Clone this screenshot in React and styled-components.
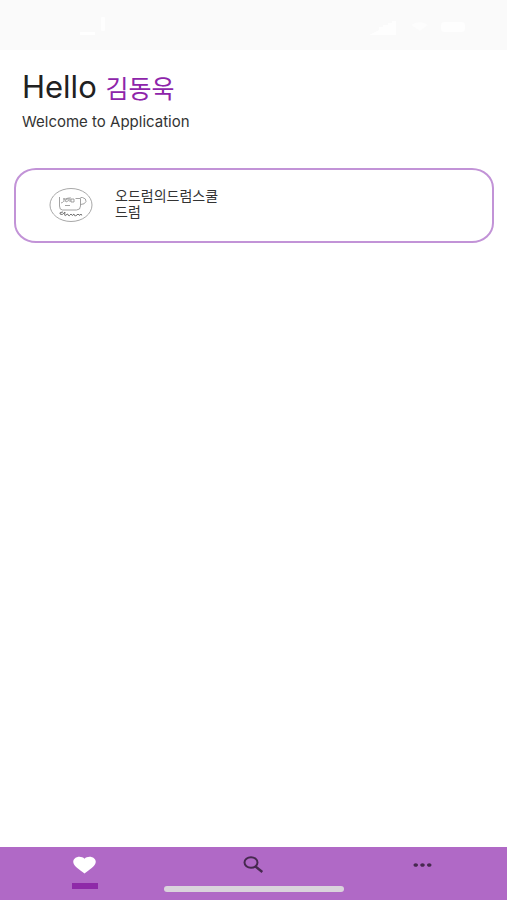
import React, { useState } from 'react';
import styled, { createGlobalStyle } from 'styled-components';
import { MdFavorite, MdMoreHoriz } from 'react-icons/md';

const GlobalStyle = createGlobalStyle`
  * {
    box-sizing: border-box;
  }

  body {
    margin: 0;
    background-color: #ffffff;
    font-family: Inter, 'Noto Sans CJK KR', sans-serif;
  }
`;

const Page = styled.div`
  min-height: 100vh;
  display: flex;
  flex-direction: column;
`;

const StatusBar = styled.div`
  height: 50px;
  padding: 16px 40px 0 68px;
  display: flex;
  justify-content: space-between;
  background-color: #fafafa;
`;

const StatusIcons = styled.svg`
  display: block;
  fill: #ffffff;
`;

const Header = styled.header`
  padding: 19px 22px 0;
`;

const Title = styled.h1`
  margin: 0;
  font-size: 31px;
  font-weight: 400;
  line-height: 36px;
  color: #212121;
`;

const UserName = styled.span`
  font-size: 25px;
  color: #8e24aa;
`;

const Subtitle = styled.p`
  margin: 5px 0 0;
  font-size: 15px;
  line-height: 20px;
  color: #333333;
`;

const Main = styled.main`
  flex: 1;
  padding: 36px 13px 0 14px;
`;

const SchoolCard = styled.a`
  display: flex;
  align-items: flex-start;
  gap: 22px;
  padding: 18px 33px;
  border: 2px solid #c293d7;
  border-radius: 22px / 20px;
  color: #333333;
  text-decoration: none;
`;

const SchoolLogo = styled.svg`
  flex: none;
  display: block;
`;

const SchoolText = styled.div`
  font-size: 14px;
  line-height: 16px;
`;

const TabBar = styled.nav`
  position: relative;
  display: flex;
  height: 53px;
  background-color: #b069c6;
`;

const Tab = styled.button`
  flex: 1;
  display: flex;
  flex-direction: column;
  align-items: center;
  gap: 7px;
  padding: 7px 0 0;
  border: 0;
  background: none;
  color: ${({ $active }) => ($active ? '#ffffff' : '#46294f')};
  cursor: pointer;

  svg {
    width: 27px;
    height: 22px;
  }

  &::after {
    content: '';
    width: 26px;
    height: 6px;
    background-color: ${({ $active }) => ($active ? '#8e2aa8' : 'transparent')};
  }
`;

const HomeIndicator = styled.div`
  position: absolute;
  left: 50%;
  bottom: 8px;
  width: 180px;
  height: 6px;
  margin-left: -90px;
  border-radius: 3px;
  background-color: #dad3dc;
`;

const SearchIcon = () => (
  <svg viewBox="0 0 27 22" fill="none" stroke="currentColor" strokeWidth="2" aria-hidden="true">
    <ellipse cx="11" cy="8.500" rx="6.500" ry="5.200" />
    <path d="M15.500 12.500l6.800 5.500" strokeWidth="2.400" />
  </svg>
);

const tabs = [
  { label: 'Favorites', Icon: MdFavorite },
  { label: 'Search', Icon: SearchIcon },
  { label: 'More', Icon: MdMoreHoriz },
];

const App = () => {
  const [active, setActive] = useState('Favorites');

  return (
    <>
      <GlobalStyle />
      <Page>
        <StatusBar>
          <StatusIcons width="40" height="20" aria-hidden="true">
            <rect x="12" y="16" width="15" height="3" />
            <rect x="33" y="1" width="4" height="14" rx="1" opacity="0.8" />
          </StatusIcons>
          <StatusIcons width="98" height="20" aria-hidden="true">
            <path d="M0 19L10 14V11h4V9h5V7h4V5h4v14z" opacity="0.7" />
            <path d="M42 9q9-6 17 0l-8 6z" opacity="0.5" />
            <rect x="72" y="6" width="24" height="10" rx="3" opacity="0.7" />
          </StatusIcons>
        </StatusBar>

        <Header>
          <Title>
            Hello <UserName>김동욱</UserName>
          </Title>
          <Subtitle>Welcome to Application</Subtitle>
        </Header>

        <Main>
          <SchoolCard href="#school">
            <SchoolLogo width="44" height="35" viewBox="0 0 44 35" fill="none" stroke="#8c8c8c" aria-hidden="true">
              <ellipse cx="22" cy="17" rx="21" ry="16.500" stroke="#a8a8a8" />
              {/* cup with its handle */}
              <path
                d="M10.500 9v9q0 4 3 4h14q4 0 4-4V10.500h-5M31.500 9.500h2q4 1 3.500 4q-1 3-5.500 3"
                strokeWidth="0.8"
              />
              <path
                d="M12 15q4-1 3-5M14 11h5M16 14q1-5 4-4q1 3-3 4M21 9v5M22 11h3v3h-3zM16 17.500h5"
                strokeWidth="0.8"
              />
              {/* pen flourish under the cup */}
              <path
                d="M14 24q-4 0-3 2q2 2 5-2q-1 5 1 3t2 0q1 2 3-1q1 3 3 0q0 3 3 1q1-2 2 0q1 1 2-1q1 2 1 1"
                strokeWidth="1"
                stroke="#707070"
              />
            </SchoolLogo>
            <SchoolText>
              오드럼의드럼스쿨
              <br />
              드럼
            </SchoolText>
          </SchoolCard>
        </Main>

        <TabBar>
          {tabs.map(({ label, Icon }) => (
            <Tab
              key={label}
              type="button"
              aria-label={label}
              $active={active === label}
              onClick={() => setActive(label)}
            >
              <Icon preserveAspectRatio="none" />
            </Tab>
          ))}
          <HomeIndicator />
        </TabBar>
      </Page>
    </>
  );
};

export default App;
